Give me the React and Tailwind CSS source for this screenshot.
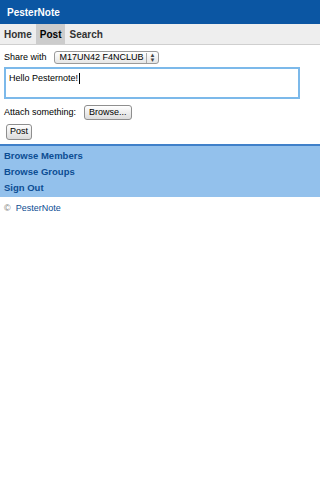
import React from 'react';

const font = { fontFamily: '"Liberation Sans", Arial, sans-serif' };

export default function App() {
    return (
        <div className="w-[320px] min-h-[480px] bg-white text-[9px] text-black" style={font}>
            {/* header */}
            <div className="h-[24px] bg-[#0b56a3] flex items-center px-[7px]">
                <span className="text-white font-bold text-[10px]">PesterNote</span>
            </div>

            {/* tabs */}
            <div className="h-[21px] bg-[#eeeeee] border-b border-[#cfcfcf] flex font-bold text-[10px] text-[#333]">
                <span className="px-[4px] flex items-center">Home</span>
                <span className="px-[4px] flex items-center bg-[#cccccc] text-black">Post</span>
                <span className="px-[4px] flex items-center">Search</span>
            </div>

            {/* form */}
            <div className="px-[4px] pt-[6px]">
                <div className="flex items-center gap-[7px] h-[13px]">
                    <span>Share with</span>
                    <div className="h-[13px] w-[105px] border border-[#9a9a9a] rounded-[3px] bg-gradient-to-b from-white to-[#e6e6e6] flex items-center justify-between pl-[5px] pr-[2px] whitespace-nowrap">
                        <span className="text-[9px]">M17UN42 F4NCLUB</span>
                        <span className="border-l border-[#aaa] pl-[3px] text-[6px] leading-[5px] flex flex-col items-center text-[#444]">
                            <span>▲</span>
                            <span>▼</span>
                        </span>
                    </div>
                </div>

                <div className="mt-[3px] w-[296px] h-[32px] border-2 border-[#7cb9ea] px-[3px] pt-[4px] flex items-start">
                    <span className="leading-[11px]">Hello Pesternote!</span>
                    <span className="w-[1px] h-[11px] bg-black ml-[1px]"></span>
                </div>

                <div className="flex items-center gap-[8px] mt-[6px] h-[15px]">
                    <span>Attach something:</span>
                    <button className="h-[15px] px-[4px] border border-[#8e8e8e] rounded-[3px] bg-gradient-to-b from-white to-[#dcdcdc] text-[9px]" style={font}>Browse...</button>
                </div>

                <button className="mt-[4px] ml-[2px] h-[16px] px-[3px] border border-[#8e8e8e] rounded-[3px] bg-gradient-to-b from-white to-[#dcdcdc] text-[9px] block" style={font}>Post</button>
            </div>

            {/* links */}
            <div className="mt-[4px] bg-[#93c1ec] border-t-2 border-[#3f80c9] pt-[2px] pb-[1px] px-[4px] flex flex-col font-bold text-[9.5px] text-[#0c4d93]">
                <span className="h-[16px] flex items-center">Browse Members</span>
                <span className="h-[16px] flex items-center">Browse Groups</span>
                <span className="h-[16px] flex items-center">Sign Out</span>
            </div>

            <div className="px-[4px] pt-[5px] h-[19px] flex items-center gap-[5px] text-[9px]">
                <span className="text-[#777]">©</span>
                <span className="text-[#0c4d93]">PesterNote</span>
            </div>
        </div>
    );
}
